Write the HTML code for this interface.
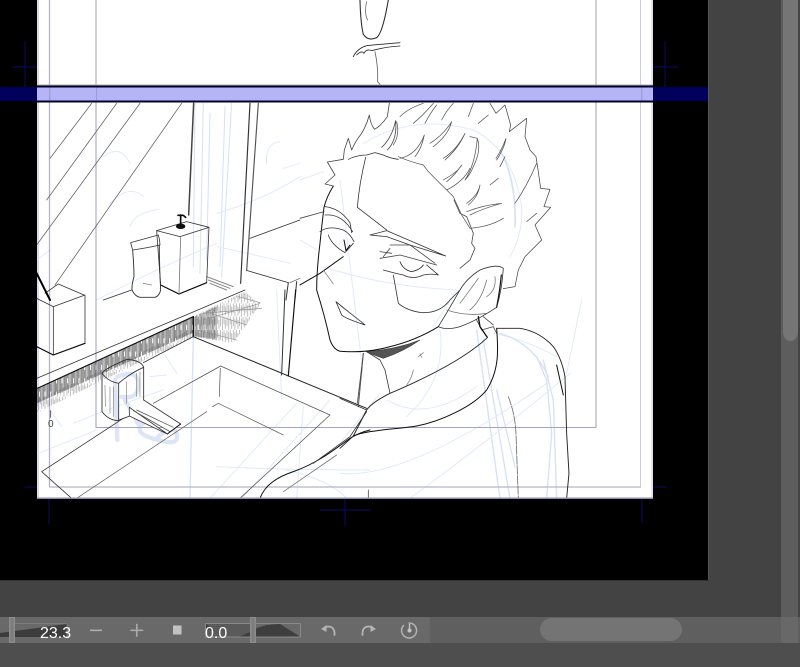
<!DOCTYPE html>
<html><head><meta charset="utf-8"><style>
html,body{margin:0;padding:0;background:#434343}
body{width:800px;height:667px;overflow:hidden;position:relative;font-family:"Liberation Sans",sans-serif}
svg{position:absolute;left:0;top:0}
text{font-family:"Liberation Sans",sans-serif}
</style></head><body>
<svg width="800" height="667" viewBox="0 0 800 667" fill="none" stroke-linecap="round" stroke-linejoin="round">
<defs>
<clipPath id="pg"><rect x="37" y="0" width="616" height="498"/></clipPath>
<filter id="soft" x="0" y="0" width="100%" height="100%"><feGaussianBlur stdDeviation="0.3"/></filter>
<pattern id="h1" patternUnits="userSpaceOnUse" width="17" height="40">
<path d="M1.500 0V40M5 0V40M8 0V40M11 0V24M14.500 0V40" stroke="#222" stroke-width="1.700" stroke-opacity=".85"/>
</pattern>
<pattern id="h2" patternUnits="userSpaceOnUse" width="19" height="40">
<path d="M2 0V28M7 6V40M12 0V22M16 10V36" stroke="#555" stroke-width="1.600" stroke-opacity=".7"/>
</pattern>
</defs>
<rect width="800" height="667" fill="#434343"/>
<rect x="0" y="0" width="708" height="580" fill="#000"/>
<rect x="708" y="0" width="1" height="581" fill="#555"/>
<rect y="580" width="709" height="1" fill="#333"/>
<!-- scrollbars -->
<rect x="781" y="0" width="19" height="617" fill="#5d5d5d"/>
<path d="M783 0H798V332a7.500 9 0 0 1-15 0Z" fill="#757575"/>
<rect x="798" y="0" width="2" height="643" fill="#444"/>
<rect y="617" width="800" height="26" fill="#5f5f5f"/>
<rect y="617" width="430" height="26" fill="#696969"/>
<rect x="781" y="617" width="17" height="26" fill="#686868"/>
<rect y="643" width="800" height="24" fill="#4e4e4e"/>
<rect x="540" y="618" width="142" height="23" rx="11.500" fill="#747474"/>
<!-- crosshair marks -->
<g stroke="#0b0b66" stroke-width="1">
<path d="M25 42V90M13 67H37M665 42V87M653 67H678M345 498V525M320 510H370M49 498V524M25 487H37M642 498V522M653 487H666"/>
</g>
<!-- page -->
<rect x="37" y="0" width="616" height="498" fill="#fff"/>
<rect x="37" y="0" width="2" height="498" fill="#dcdce8"/>
<rect x="651" y="0" width="2" height="498" fill="#e4e4f0"/>
<g clip-path="url(#pg)" filter="url(#soft)">
<!-- pale blue underdrawing -->
<g stroke="#e2eaf9" stroke-width="1">
<g transform="translate(30,100) scale(.3333)" stroke-width="3">
<path d="M495 10L490 500M520 10L510 520M540 40L530 480M585 20L570 500M605 10L575 530" stroke="#d5e1f6"/>
<path d="M220 170Q270 130 300 190M240 310Q300 250 340 290M300 380Q310 340 385 328M560 340Q700 300 810 230M710 190Q705 130 750 125M760 205L810 190M560 440Q700 470 780 490M200 600Q350 520 560 430M20 480L60 450"/>
</g>
<g transform="translate(300,100) scale(.3333)" stroke-width="3">
<path d="M190 130Q340 40 520 90Q640 150 665 320Q670 400 630 470M0 240L70 215M120 240L190 830M0 420L50 450M70 500Q250 560 470 570M530 690L540 770M400 680L470 570M580 700Q680 720 770 770"/>
<path d="M600 150Q650 240 645 380" stroke="#d5e1f6" stroke-width="5"/>
</g>
<g transform="translate(340,300) scale(.3333)" stroke-width="3">
<path d="M410 90L480 595M430 120L510 595M470 270L525 500M590 170L620 240L635 400L620 595M610 180L640 300L650 595M480 100Q580 130 625 230" stroke="#d5e1f6" stroke-width="4"/>
<path d="M120 280L0 430M140 300Q260 370 410 260M300 90Q320 240 200 350M0 520Q200 540 620 250M210 595Q450 420 690 220M725 0L680 220"/>
</g>
<g transform="translate(30,290) scale(.3333)" stroke-width="3">
<path d="M490 140L480 625" stroke="#d5e1f6" stroke-width="4"/>
<path d="M60 360L95 410M130 400Q250 350 400 300M405 195L440 250M360 260L410 255M640 620L900 330M540 625L800 340M820 350L800 625M0 500L200 420M560 530Q760 540 1020 540M770 540Q900 570 950 625M740 0L755 330"/>
</g>
<g transform="translate(30,290) scale(.3333)" stroke="#dde5f6" stroke-width="13">
<path d="M255 270L262 450M262 260Q330 235 325 290Q320 330 275 320M285 330L330 410M345 395Q300 430 385 450Q450 470 440 430Q430 400 385 440"/>
</g>
</g>
<!-- guide lines -->
<path d="M49.500 0V487H641V0" stroke="#b3b3c9" stroke-width="1.300"/>
<path d="M96 0V427.500H596V0" stroke="#a5a5c0" stroke-width="1.100"/>
<!-- top fragment -->
<g transform="scale(.3333)" stroke="#2c2c2c" stroke-width="2.600">
<path d="M1080 0Q1082 70 1090 103Q1105 125 1130 113Q1148 100 1165 0" stroke-width="3.200"/>
<path d="M1100 5Q1092 40 1103 60" stroke="#777"/>
<path d="M1060 170Q1072 145 1100 137Q1150 132 1200 128M1070 165Q1085 150 1092 160Q1100 145 1115 152Q1160 140 1200 138"/>
<path d="M1125 155Q1135 200 1133 245L1142 255" stroke="#666"/>
</g>
<!-- mirror, bottle, shelf top -->
<g transform="translate(30,100) scale(.3333)" stroke="#333" stroke-width="2.400">
<path d="M60 175L185 10M50 300L260 10M20 435L330 10M75 555L455 10" stroke="#666"/>
<path d="M491 10L476 345" stroke="#444" stroke-width="4.500"/>
<path d="M660 10L632 550" stroke-width="3.500"/>
<path d="M685 10L650 512" stroke="#555" stroke-width="3.500"/>
<path d="M530 530L610 560M535 540L600 565M540 550L590 570" stroke="#888" stroke-width="3"/>
<path d="M380 392L470 365L537 382L450 410Z"/>
<path d="M380 392L392 555L447 582L530 548L537 382"/>
<path d="M392 555L447 582L530 548" stroke="#111" stroke-width="3.500"/>
<path d="M452 410L447 582" stroke="#777"/>
<ellipse cx="452" cy="379" rx="14" ry="8" fill="#111" stroke="none"/>
<path d="M452 345L452 372M444 346H460L467 352" stroke="#111" stroke-width="5"/>
<path d="M302 428L385 405Q390 420 390 435Q345 445 308 450Q305 440 302 428Z"/>
<path d="M308 450Q312 500 312 530Q305 555 306 570Q315 590 330 592H375Q388 588 392 570Q388 500 388 435" stroke-width="2.800"/>
<path d="M340 550L365 555" stroke="#888"/>
<path d="M660 415L810 360M652 512L775 548" stroke="#333"/>
<path d="M775 548L768 600M800 545L795 600" stroke-width="3"/>
<path d="M780 548L810 535" stroke="#666"/>
<path d="M220 600L305 570M45 580L85 552L162 585"/>
<path d="M20 520L60 600" stroke="#000" stroke-width="6"/>
</g>
<!-- sink -->
<g transform="translate(30,290) scale(.3333)" stroke="#333" stroke-width="2.400">
<path d="M20 25L70 50L165 15V160L70 195L20 170M70 50V195"/>
<path d="M20 170L70 195L165 160" stroke="#111" stroke-width="3.500"/>
<path d="M20 265L645 0"/>
<!-- hatching -->
<path d="M20 296L490 80V128L20 340Z" fill="url(#h1)" stroke="none"/>
<path d="M20 330L490 115V142L340 212L20 368Z" fill="url(#h2)" stroke="none"/>
<path d="M492 78L645 5L690 45L610 160L490 140Z" fill="url(#h2)" stroke="none"/>
<path d="M492 80L560 50V150L492 138Z" fill="url(#h1)" stroke="none" opacity=".75"/>
<path d="M520 70L695 55M520 90L690 40M540 70L650 105M625 20L690 38M500 120L620 150" stroke="#888" stroke-width="1.800"/>
<path d="M20 296L490 80" stroke="#111" stroke-width="3.500"/>
<path d="M490 80V140" stroke="#111" stroke-width="4"/>
<path d="M490 140L1010 355" stroke="#222" stroke-width="3"/>
<path d="M490 140L340 218M280 385L35 545L125 625" stroke="#333"/>
<path d="M572 228L900 375L630 625M572 228L370 340" stroke="#555"/>
<path d="M530 365L140 625M565 340L760 435M565 340L548 350M571 235L568 320" stroke="#666"/>
<path d="M216 250Q225 235 291 208Q335 212 341 232V330M216 250V365Q235 390 262 392L300 378M216 250Q235 275 266 280Q300 250 341 232M266 280V392" stroke="#333" stroke-width="2.600"/>
<path d="M225 285L226 350M240 290L240 370M250 290V380M290 275V340M320 250V320M330 245V320" stroke="#777" stroke-width="1.800"/>
<path d="M341 330L452 402L412 432L298 352V378L412 432" fill="#fff"/>
<path d="M310 362L420 425M320 360L430 412" stroke="#555"/>
<path d="M412 432L452 402" stroke="#111" stroke-width="3"/>
<path d="M765 0L755 255" stroke="#333" stroke-width="3"/>
<path d="M797 0L775 258" stroke="#111" stroke-width="3.500"/>
<path d="M1000 190L985 350" stroke="#555" stroke-width="3"/>
<!-- collar lower-left -->
<path d="M690 625C705 585 740 562 790 545C860 520 905 485 960 445C985 430 1000 425 1020 420" stroke="#111" stroke-width="3"/>
<path d="M850 520L960 440L1010 365" stroke="#333"/>
<path d="M760 605L920 495" stroke="#777"/>
<path d="M62 362V382" stroke="#444"/>
</g>
<text x="48" y="427" font-size="10" fill="#444">0</text>
<!-- head -->
<g transform="translate(300,100) scale(.3333)" stroke="#222" stroke-width="2.400">
<path d="M100 258Q80 290 72 322Q65 380 60 430Q50 510 50 570Q75 650 90 720Q100 748 120 754Q200 760 270 740Q350 720 415 680" stroke="#111" stroke-width="3"/>
<path d="M0 355L72 335" stroke="#444"/>
<path d="M0 555L60 520L130 470" stroke="#111" stroke-width="3"/>
<path d="M70 510L100 552" stroke="#888"/>
<path d="M145 178Q170 165 200 165L225 158L250 165Q270 175 295 178" stroke="#333"/>
<path d="M197 172Q178 250 172 322L260 390" stroke="#333"/>
<path d="M462 300L480 340L500 350L520 400L515 430L525 445L510 480L480 505" stroke="#444"/>
<!-- hair left outer -->
<path d="M100 258L75 252L105 225L82 186L130 178L133 150L145 115L155 150Q165 125 185 100Q200 75 208 45Q212 75 224 88Q245 75 262 50L268 10" stroke="#444"/>
<path d="M262 150Q292 120 287 62Q275 115 245 142" stroke="#444"/>
</g>
<!-- hair detail -->
<g transform="translate(390,100) scale(.3333)" stroke="#555" stroke-width="2.200">
<path d="M300 10L318 40L345 15L362 75L358 95L410 55L405 110L420 150L438 170L445 215L452 265L480 268L462 320L482 322L435 375L455 420" stroke="#444"/>
<path d="M455 420L405 470L385 510L375 560L340 566" stroke="#444"/>
<path d="M25 170Q60 185 100 195L115 215L150 250L190 290L215 345L240 385"/>
<path d="M20 65Q30 105 10 135M30 50Q55 25 100 10M70 70Q100 45 130 10M105 70Q120 40 140 15M155 60Q170 30 190 10"/>
<path d="M120 130Q160 105 185 65Q175 105 130 140M30 175Q80 165 103 105Q95 145 75 170M160 175Q200 150 225 100Q205 145 165 180"/>
<path d="M235 50L250 10M265 70L295 45M240 110L262 115Q275 150 250 200Q240 225 225 240Q255 195 262 115M320 180Q345 140 348 115Q335 150 318 175M330 200L345 170"/>
<path d="M160 240Q205 215 215 195Q195 225 170 245M170 270Q220 245 240 205M230 310Q265 285 270 255Q265 290 235 315M300 255L325 235"/>
<path d="M230 335Q280 315 335 310Q280 325 240 345M240 385Q300 380 340 355M375 310Q410 260 440 190M410 365L440 340"/>
</g>
<!-- face details -->
<g transform="translate(300,100) scale(.3333)" stroke="#222" stroke-width="2.400">
<path d="M75 320Q120 325 150 368L155 398M75 345Q125 340 158 395M60 395Q85 375 130 390Q150 400 162 425" stroke="#333"/>
<path d="M85 405Q95 435 135 458L160 430" stroke="#333"/>
<path d="M132 420L138 452L150 435" stroke="#111" stroke-width="3"/>
<path d="M210 405L260 392L437 468L330 435L260 410Z" fill="#fff" stroke="#333"/>
<path d="M270 435H330L405 490M240 475L300 465L410 495M240 455L275 460M270 445L250 470" stroke="#444"/>
<path d="M250 510Q285 520 310 525Q340 540 370 525Q395 520 415 525L380 495" stroke="#333"/>
<path d="M300 485Q310 510 335 515Q360 510 370 495" stroke="#222"/>
<path d="M280 525L295 610Q320 632 365 638Q420 640 450 600L480 570" stroke="#333"/>
<path d="M108 605L195 675Q135 655 125 645Z" stroke="#222"/>
<path d="M122 618L190 670" stroke="#666"/>
<path d="M415 680Q440 692 480 680Q530 662 590 622Q606 570 610 505Q590 490 540 510Q500 535 480 570Q440 640 415 680" stroke="#333"/>
<path d="M590 622Q600 570 604 525" stroke="#111" stroke-width="3.500"/>
<path d="M440 630Q500 650 560 640M480 610Q510 570 535 535M510 630Q545 600 560 540M560 590Q590 570 585 530" stroke="#777"/>
<path d="M530 660L545 690L580 680L590 700M550 650L580 675" stroke="#444"/>
</g>
<!-- neck & shoulder -->
<g transform="translate(340,300) scale(.3333)" stroke="#222" stroke-width="2.400">
<path d="M470 85H540Q600 95 640 140Q665 175 675 230L680 400L687 520L680 595" stroke="#222" stroke-width="2.800"/>
<path d="M650 195L670 285" stroke="#111" stroke-width="3"/>
<path d="M440 115C380 170 280 225 150 280C110 300 90 315 80 330L40 408L0 445" stroke="#222" stroke-width="2.800"/>
<path d="M470 85C475 150 478 210 440 270C400 320 300 365 230 378C170 388 80 390 40 408" stroke="#111" stroke-width="3"/>
<path d="M80 155L120 180L135 210L150 280" stroke="#333"/>
<path d="M78 155Q170 148 240 120Q190 155 130 175Q100 165 78 155Z" fill="#555" stroke="#222" stroke-width="1.500"/>
<path d="M415 50L420 80L442 112" stroke="#111" stroke-width="4"/>
<path d="M505 290Q525 340 528 400L535 595" stroke="#666" stroke-dasharray="26 4"/>
<path d="M85 570V595" stroke="#444"/>
<path d="M70 160L52 310" stroke="#444"/>
<path d="M0 295L80 330" stroke="#333"/>
<path d="M220 210Q215 235 200 255M235 170L250 158M240 162L245 172" stroke="#888"/>
</g>
</g>
<rect x="37" y="497.500" width="616" height="1.500" fill="#8d8db0"/>
<!-- band -->
<rect x="0" y="87" width="708" height="14" fill="#00005c"/>
<rect x="37" y="87" width="616" height="14" fill="#b4b4f6"/>
<rect x="49" y="87" width="1.300" height="14" fill="#9c9cd8"/>
<rect x="96" y="87" width="1.100" height="14" fill="#9c9cd8"/>
<rect x="641" y="87" width="1.300" height="14" fill="#9c9cd8"/>
<rect x="37" y="85.500" width="616" height="2" fill="#000028"/>
<rect x="37" y="84.500" width="616" height="1" fill="#aaa"/>
<rect x="37" y="100.500" width="616" height="2" fill="#000028"/>
<!-- toolbar -->
<path d="M0 633L67 624V637H0Z" fill="#3c3c3c"/>
<path d="M14 623.500H67V637" stroke="#7d7d7d" stroke-width="1"/>
<rect x="9" y="617" width="6" height="26" fill="#8c8c8c"/>
<rect x="10.500" y="618" width="3" height="24" fill="#7c7c7c"/>
<text x="40" y="638" font-size="16" fill="#fff">23.3</text>
<rect x="90" y="629.500" width="12" height="1.700" fill="#a9a9a9"/>
<path d="M131 630.300H142.500M136.800 624.500V636" stroke="#a9a9a9" stroke-width="1.700"/>
<rect x="173" y="625.500" width="8.500" height="9" fill="#c2c2c2"/>
<rect x="205.500" y="623.500" width="95" height="13.500" stroke="#8a8a8a" stroke-width="1" fill="none"/>
<path d="M206 624H250V632L240 636.500H206Z" fill="#5a5a5a"/>
<path d="M206 624L214 630H206Z M240 636.500L250 632V636.500Z M255 629Q265 624 280 624L300 636.500H255Z" fill="#3e3e3e"/>
<rect x="250" y="617" width="6" height="26" fill="#8c8c8c"/>
<rect x="251.500" y="618" width="3" height="24" fill="#7c7c7c"/>
<text x="205" y="638" font-size="16" fill="#fff">0.0</text>
<!-- undo -->
<g stroke="#b4b4b4" stroke-width="1.800" fill="none">
<path d="M334.500 635Q335 626.500 328 626.500L325 627.300"/>
<path d="M362.500 635Q362 626.500 369 626.500L372 627.300"/>
<path d="M403.500 625.500A7.500 7.500 0 1 0 409 623" stroke-width="1.500"/>
</g>
<path d="M321 629L326.500 625V632Z M376 629L370.500 625V632Z" fill="#b4b4b4"/>
<circle cx="409.500" cy="630.500" r="2" fill="#c4c4c4"/>
<rect x="408.800" y="624" width="1.400" height="6" fill="#c4c4c4"/>
</svg>
</body></html>
